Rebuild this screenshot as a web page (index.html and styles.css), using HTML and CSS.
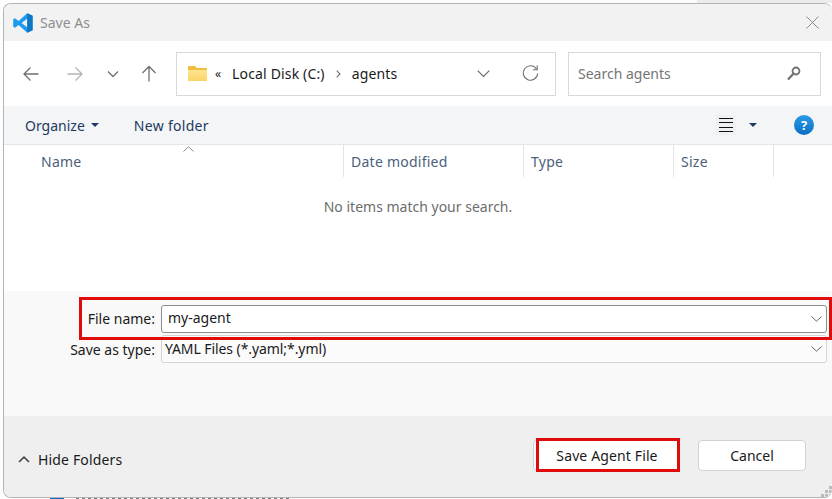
FILE: index.html
```html
<!DOCTYPE html>
<html lang="en">
<head>
    <meta charset="UTF-8">
    <title>Save As</title>
    <link rel="stylesheet" href="styles.css">
</head>
<body>
    <div class="dialog">
        <div class="titlebar">
            <svg class="app-icon" width="20" height="20" viewBox="0 0 20 20">
                <path d="M14.2 0.2 L19.6 2.8 V17.2 L14.2 19.8 L5.6 11.9 L2 14.7 L0.2 13.7 V6.3 L2 5.3 L5.6 8.1 Z M14.4 5.5 L8.6 10 L14.4 14.5 Z" fill="#1f9cf0" fill-rule="evenodd"/>
                <path d="M14.2 0.2 L19.6 2.8 V17.2 L14.2 19.8 Z" fill="#0e78c4"/>
            </svg>
            <span class="title-text">Save As</span>
            <svg class="close-icon" width="13" height="13" viewBox="0 0 13 13">
                <path d="M0.5 0.5 L12.5 12.5 M12.5 0.5 L0.5 12.5" stroke="#8a8a8a" stroke-width="1" fill="none"/>
            </svg>
        </div>

        <div class="navbar">
            <svg class="nav-btn" width="16" height="16" viewBox="0 0 16 16">
                <path d="M15.5 8 H1 M7.5 1.5 L1 8 L7.5 14.5" stroke="#707070" stroke-width="1.3" fill="none"/>
            </svg>
            <svg class="nav-btn nav-forward" width="16" height="16" viewBox="0 0 16 16">
                <path d="M0.5 8 H15 M8.5 1.5 L15 8 L8.5 14.5" stroke="#b4b4b4" stroke-width="1.3" fill="none"/>
            </svg>
            <svg class="nav-btn nav-recent" width="12" height="8" viewBox="0 0 12 8">
                <path d="M1 1.5 L6 6.5 L11 1.5" stroke="#707070" stroke-width="1.3" fill="none"/>
            </svg>
            <svg class="nav-btn nav-up" width="16" height="17" viewBox="0 0 16 17">
                <path d="M8 16.5 V1.5 M1.5 8 L8 1.5 L14.5 8" stroke="#707070" stroke-width="1.3" fill="none"/>
            </svg>

            <div class="address">
                <svg class="folder-icon" width="19" height="15" viewBox="0 0 19 15">
                    <defs>
                        <linearGradient id="folderFill" x1="0" y1="0" x2="0" y2="1">
                            <stop offset="0" stop-color="#fde391"/>
                            <stop offset="1" stop-color="#fbd468"/>
                        </linearGradient>
                    </defs>
                    <path d="M0 1 Q0 0 1 0 H7 L9 2 H19 V15 H0 Z" fill="#f2bd3f"/>
                    <path d="M0 4 H19 V15 H0 Z" fill="url(#folderFill)"/>
                </svg>
                <span class="crumb-more">«</span>
                <span class="crumb">Local Disk (C:)</span>
                <svg class="crumb-sep" width="5" height="8" viewBox="0 0 5 8">
                    <path d="M0.7 0.7 L4 4 L0.7 7.3" stroke="#707070" stroke-width="1.1" fill="none"/>
                </svg>
                <span class="crumb">agents</span>
                <svg class="address-drop" width="13" height="8" viewBox="0 0 13 8">
                    <path d="M0.7 0.7 L6.5 6.5 L12.3 0.7" stroke="#666" stroke-width="1.1" fill="none"/>
                </svg>
                <svg class="refresh" width="17" height="17" viewBox="0 0 17 17">
                    <path d="M14.5 4 A7.2 7.2 0 1 0 15.7 8.5" stroke="#707070" stroke-width="1.1" fill="none"/>
                    <path d="M15.2 0.5 V4.8 H10.9" stroke="#707070" stroke-width="1.1" fill="none"/>
                </svg>
            </div>

            <div class="search">
                <span class="search-text">Search agents</span>
                <svg width="14" height="15" viewBox="0 0 14 15">
                    <circle cx="9" cy="5" r="3.5" stroke="#707070" stroke-width="1.8" fill="none"/>
                    <path d="M6.4 7.8 L1 13.5" stroke="#707070" stroke-width="2.2" fill="none"/>
                </svg>
            </div>
        </div>

        <div class="toolbar">
            <span class="tool">Organize</span>
            <span class="caret caret-organize"></span>
            <span class="tool tool-new">New folder</span>
            <span class="view-btn">
                <span class="view-line"></span>
                <span class="view-line"></span>
                <span class="view-line"></span>
                <span class="view-line"></span>
            </span>
            <span class="caret caret-view"></span>
            <span class="help">?</span>
        </div>

        <div class="file-list">
            <div class="columns">
                <div class="col col-name">
                    Name
                    <svg class="sort-arrow" width="11" height="6" viewBox="0 0 11 6">
                        <path d="M0.5 5.5 L5.5 0.7 L10.5 5.5" stroke="#8a8a8a" stroke-width="1" fill="none"/>
                    </svg>
                </div>
                <div class="col col-date">Date modified</div>
                <div class="col col-type">Type</div>
                <div class="col col-size">Size</div>
            </div>
            <p class="empty">No items match your search.</p>
        </div>

        <div class="form-area">
            <div class="name-row">
                <label class="form-label">File name:</label>
                <div class="combo combo-name">
                    <span class="combo-text">my-agent</span>
                    <svg width="11" height="6" viewBox="0 0 11 6">
                        <path d="M0.5 0.5 L5.5 5.2 L10.5 0.5" stroke="#666" stroke-width="1" fill="none"/>
                    </svg>
                </div>
            </div>
            <div class="type-row">
                <label class="form-label">Save as type:</label>
                <div class="combo combo-type">
                    <span class="combo-text">YAML Files (*.yaml;*.yml)</span>
                    <svg width="11" height="6" viewBox="0 0 11 6">
                        <path d="M0.5 0.5 L5.5 5.2 L10.5 0.5" stroke="#666" stroke-width="1" fill="none"/>
                    </svg>
                </div>
            </div>
        </div>

        <div class="footer">
            <svg class="hide-icon" width="12" height="7" viewBox="0 0 12 7">
                <path d="M1 6 L6 1.2 L11 6" stroke="#444" stroke-width="1.6" fill="none"/>
            </svg>
            <span class="hide-text">Hide Folders</span>
            <div class="buttons">
                <button class="btn btn-save"><span class="save-mark">Save Agent File</span></button>
                <button class="btn btn-cancel">Cancel</button>
            </div>
            <svg class="grip" width="11" height="11" viewBox="0 0 11 11">
                <path d="M8 0 h3 v3 h-3 z M4 4 h3 v3 h-3 z M8 4 h3 v3 h-3 z M0 8 h3 v3 h-3 z M4 8 h3 v3 h-3 z M8 8 h3 v3 h-3 z" fill="#bbb"/>
            </svg>
        </div>
    </div>
    <div class="behind">
        <span class="behind-icon"></span>
        <span class="behind-text"></span>
    </div>
</body>
</html>
```

FILE: styles.css
```css
* {
    box-sizing: border-box;
}

html, body {
    height: 100%;
}

body {
    margin: 0;
    padding: 3px 0 1px 3px;
    background: linear-gradient(to right, #fdfdfd 697px, #ececec 697px) top / 100% 3px no-repeat #fdfdfd;
    font-family: "Noto Sans", "Open Sans", sans-serif;
    font-size: 14px;
    color: #1a1a1a;
    overflow: hidden;
}

.dialog {
    display: flex;
    flex-direction: column;
    height: 100%;
    border: 1px solid #b4b4b4;
    border-right: none;
    border-radius: 8px;
    overflow: hidden;
    background-color: #fff;
}

.titlebar {
    display: flex;
    align-items: center;
    height: 37px;
    padding: 0 13px 0 9px;
    background-color: #f2f2f2;
}

.title-text {
    margin-left: 7px;
    color: #8e8e8e;
}

.close-icon {
    margin-left: auto;
}

.navbar {
    display: flex;
    align-items: center;
    height: 65px;
    padding: 0 5px 0 19px;
    background-color: #fff;
}

.nav-forward {
    margin-left: 28px;
}

.nav-recent {
    margin-left: 24px;
}

.nav-up {
    margin-left: 22px;
}

.address {
    display: flex;
    align-items: center;
    width: 380px;
    height: 44px;
    margin-left: 19px;
    padding: 0 16px 0 11px;
    border: 1px solid #d9d9d9;
}

.crumb-more {
    margin-left: 8px;
    font-size: 12px;
}

.crumb {
    color: #1a1a1a;
    letter-spacing: 0.15px;
}

.crumb-more + .crumb {
    margin-left: 11px;
}

.crumb-sep {
    margin: 0 11px 0 11px;
}

.address-drop {
    margin-left: auto;
}

.refresh {
    margin-left: 32px;
}

.search {
    display: flex;
    align-items: center;
    justify-content: space-between;
    width: 253px;
    height: 44px;
    margin-left: 12px;
    padding: 0 19px 0 9px;
    border: 1px solid #d9d9d9;
}

.search-text {
    color: #757575;
}

.toolbar {
    display: flex;
    align-items: center;
    height: 39px;
    padding: 0 18px 0 21px;
    background-color: #f3f5f7;
    border-bottom: 1px solid #e5e5e5;
}

.tool {
    color: #1f3a5f;
}

.caret {
    width: 0;
    height: 0;
    border-left: 4px solid transparent;
    border-right: 4px solid transparent;
    border-top: 4px solid #1f3a5f;
}

.caret-organize {
    margin-left: 6px;
}

.tool-new {
    margin-left: 35px;
    letter-spacing: 0.3px;
}

.view-btn {
    display: flex;
    flex-direction: column;
    justify-content: space-between;
    width: 20px;
    height: 20px;
    margin-left: auto;
    padding: 3px;
    background-color: #eff1f3;
}

.view-line {
    height: 1px;
    background-color: #111;
}

.caret-view {
    margin-left: 13px;
}

.help {
    width: 20px;
    height: 20px;
    margin-left: 37px;
    border-radius: 50%;
    background: linear-gradient(#2a9be8, #0a6fc4);
    color: #fff;
    font-weight: 700;
    font-size: 13px;
    line-height: 20px;
    text-align: center;
}

.file-list {
    flex: 1;
    background-color: #fff;
}

.columns {
    display: flex;
    height: 32px;
}

.col {
    display: flex;
    align-items: center;
    padding-left: 7px;
    border-right: 1px solid #e5e5e5;
    color: #4c607a;
    letter-spacing: 0.25px;
}

.col-name {
    position: relative;
    width: 340px;
    padding-left: 37px;
}

.col-date {
    width: 180px;
}

.col-type {
    width: 150px;
}

.col-size {
    width: 100px;
}

.sort-arrow {
    position: absolute;
    left: 179px;
    top: 1px;
}

.empty {
    margin: 20px 0 0;
    text-align: center;
    color: #6d6d6d;
}

.form-area {
    flex: none;
    height: 125px;
    padding-top: 6px;
    background-color: #f9f9f9;
}

.name-row {
    position: relative;
    z-index: 1;
    display: flex;
    align-items: center;
    height: 43px;
    margin-left: 75px;
    padding-right: 2px;
    border: 3px solid #e00b0b;
}

.type-row {
    display: flex;
    align-items: center;
    height: 28px;
    margin: -5px 0 0 50px;
    padding-right: 5px;
}

.form-label {
    width: 107px;
    padding-right: 6px;
    text-align: right;
    white-space: nowrap;
}

.name-row .form-label {
    width: 79px;
}

.combo {
    display: flex;
    align-items: center;
    justify-content: space-between;
    flex: 1;
    height: 28px;
    padding: 0 4px 2px 6px;
    border-radius: 3px;
}

.combo svg {
    margin-top: 2px;
}

.combo-name {
    background-color: #fff;
    border: 1px solid #8c8c8c;
}

.combo-type {
    padding-left: 3px;
    background-color: #fbfbfb;
    border: 1px solid #d4d4d4;
    letter-spacing: -0.08px;
}

.footer {
    position: relative;
    display: flex;
    align-items: center;
    flex: none;
    height: 81px;
    padding: 5px 26px 0 14px;
    background-color: #efefef;
}

.hide-text {
    margin-left: 8px;
    letter-spacing: 0.15px;
}

.buttons {
    display: flex;
    align-items: center;
    margin-left: auto;
    margin-bottom: 7px;
}

.btn {
    height: 31px;
    padding: 0;
    border: 1px solid #d2d2d2;
    border-radius: 4px;
    background-color: #fff;
    font-family: inherit;
    font-size: 14px;
    color: #1a1a1a;
}

.btn-save {
    position: relative;
    width: 147px;
    background-color: #fbfbfb;
}

.save-mark {
    position: absolute;
    left: 2px;
    top: -3px;
    display: flex;
    align-items: center;
    justify-content: center;
    width: 144px;
    height: 34px;
    padding-right: 2px;
    border: 3px solid #e00b0b;
    background-color: #fff;
    letter-spacing: 0.13px;
}

.btn-cancel {
    width: 108px;
    margin-left: 18px;
}

.grip {
    position: absolute;
    right: 0;
    bottom: 0;
}

/* bits of the window behind the dialog */
.behind {
    position: absolute;
    left: 50px;
    bottom: 0;
    display: flex;
    gap: 12px;
    height: 1px;
}

.behind-icon {
    width: 14px;
    background-color: #0f6cbd;
}

.behind-text {
    width: 214px;
    background: repeating-linear-gradient(to right, #777 0 3px, transparent 3px 6px);
}
```
